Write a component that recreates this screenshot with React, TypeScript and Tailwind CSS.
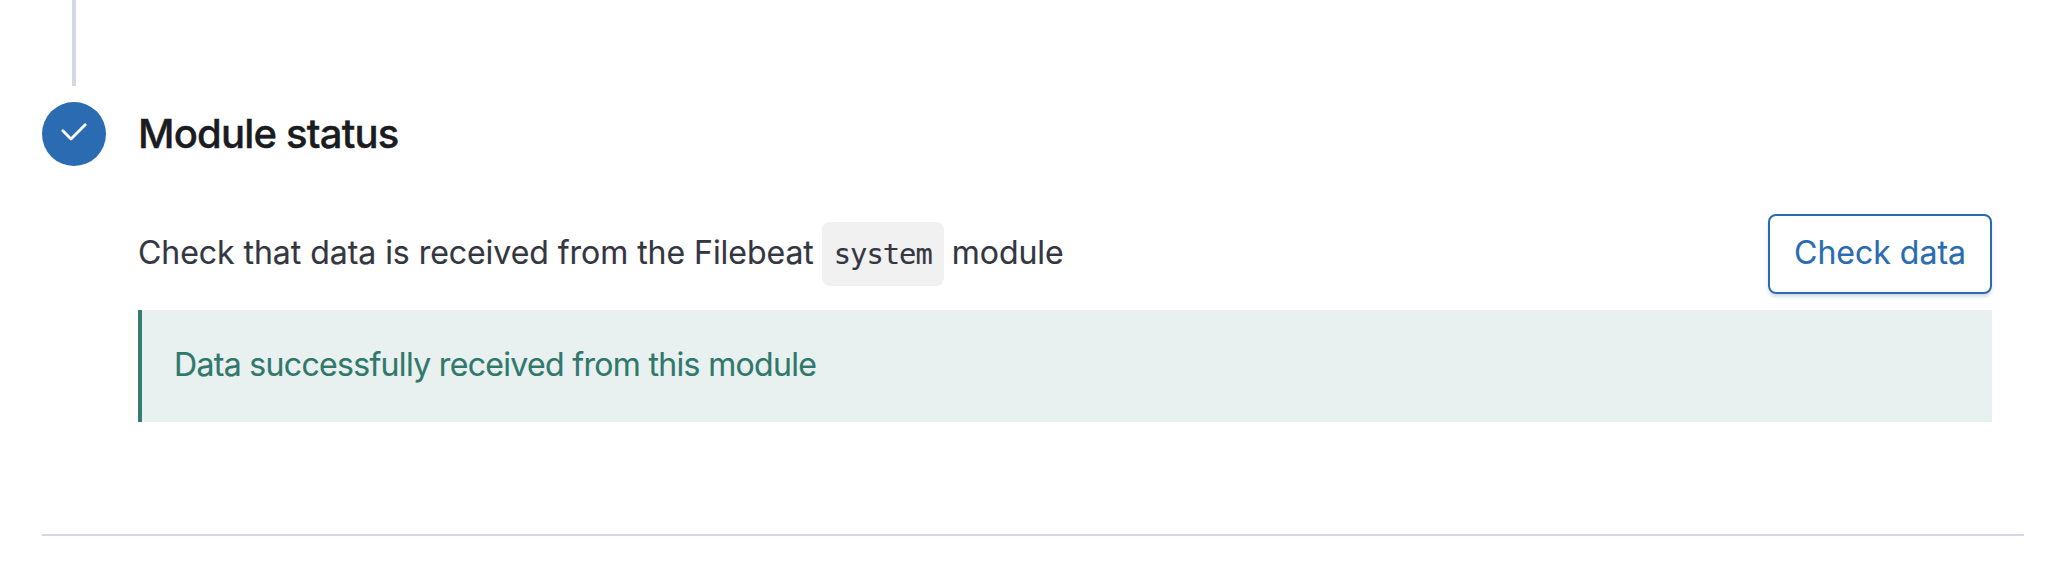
export default function App() {
  return (
    <main className="h-[578px] w-[2064px] overflow-hidden bg-white pl-[42px] font-['Inter',sans-serif] text-[#343741]">
      <div className="ml-[30px] h-[86px] w-1 bg-[#d4d8e6]" />
      <section className="w-[1950px] pt-4">
        <header className="flex h-16 items-center gap-8">
          <div className="flex size-16 items-center justify-center rounded-full bg-[#2a6bb2]">
            <svg width="32" height="32" viewBox="0 0 16 16" fill="none" stroke="white" strokeWidth="1.4" strokeLinecap="round" strokeLinejoin="round">
              <path d="M2.4 6.4 L6.5 10.5 L13.6 3.4" />
            </svg>
          </div>
          <h2 className="text-[40px] font-medium tracking-[-0.8px] text-[#1a1c21] [-webkit-text-stroke:0.4px_#1a1c21]">Module status</h2>
        </header>
        <div className="ml-24 mt-12 flex h-20 items-center justify-between">
          <p className="flex items-center text-[32px] tracking-[-0.04px]">
            <span className="-mt-0.5 [-webkit-text-stroke:0.15px_#343741]">Check that data is received from the Filebeat</span>
            <code className="ml-2 mr-2 flex h-16 w-[122px] items-center justify-center rounded-lg bg-[#f1f1f1] pt-px font-['DejaVu_Sans_Mono',monospace] text-[28.8px] tracking-[-1px] [-webkit-text-stroke:0.15px_#343741]">system</code>
            <span className="-mt-0.5 [-webkit-text-stroke:0.15px_#343741]">module</span>
          </p>
          <button className="h-20 w-[224px] rounded-lg border-2 border-[#2a6bb2] pb-0.5 text-[32px] text-[#2a6bb2] shadow-[0_3px_4px_-1px_rgba(54,97,126,0.3)] [-webkit-text-stroke:0.15px_#2a6bb2]">Check data</button>
        </div>
        <div className="ml-24 mt-4 flex h-28 items-center border-l-4 border-[#357b70] bg-[#e8f1f0] pb-0.5 pl-8 text-[32px] tracking-[-0.67px] text-[#31786c] [-webkit-text-stroke:0.15px_#31786c]">Data successfully received from this module</div>
      </section>
      <hr className="mt-28 w-[1982px] border-t-2 border-[#d4d8e6]" />
    </main>
  );
}
